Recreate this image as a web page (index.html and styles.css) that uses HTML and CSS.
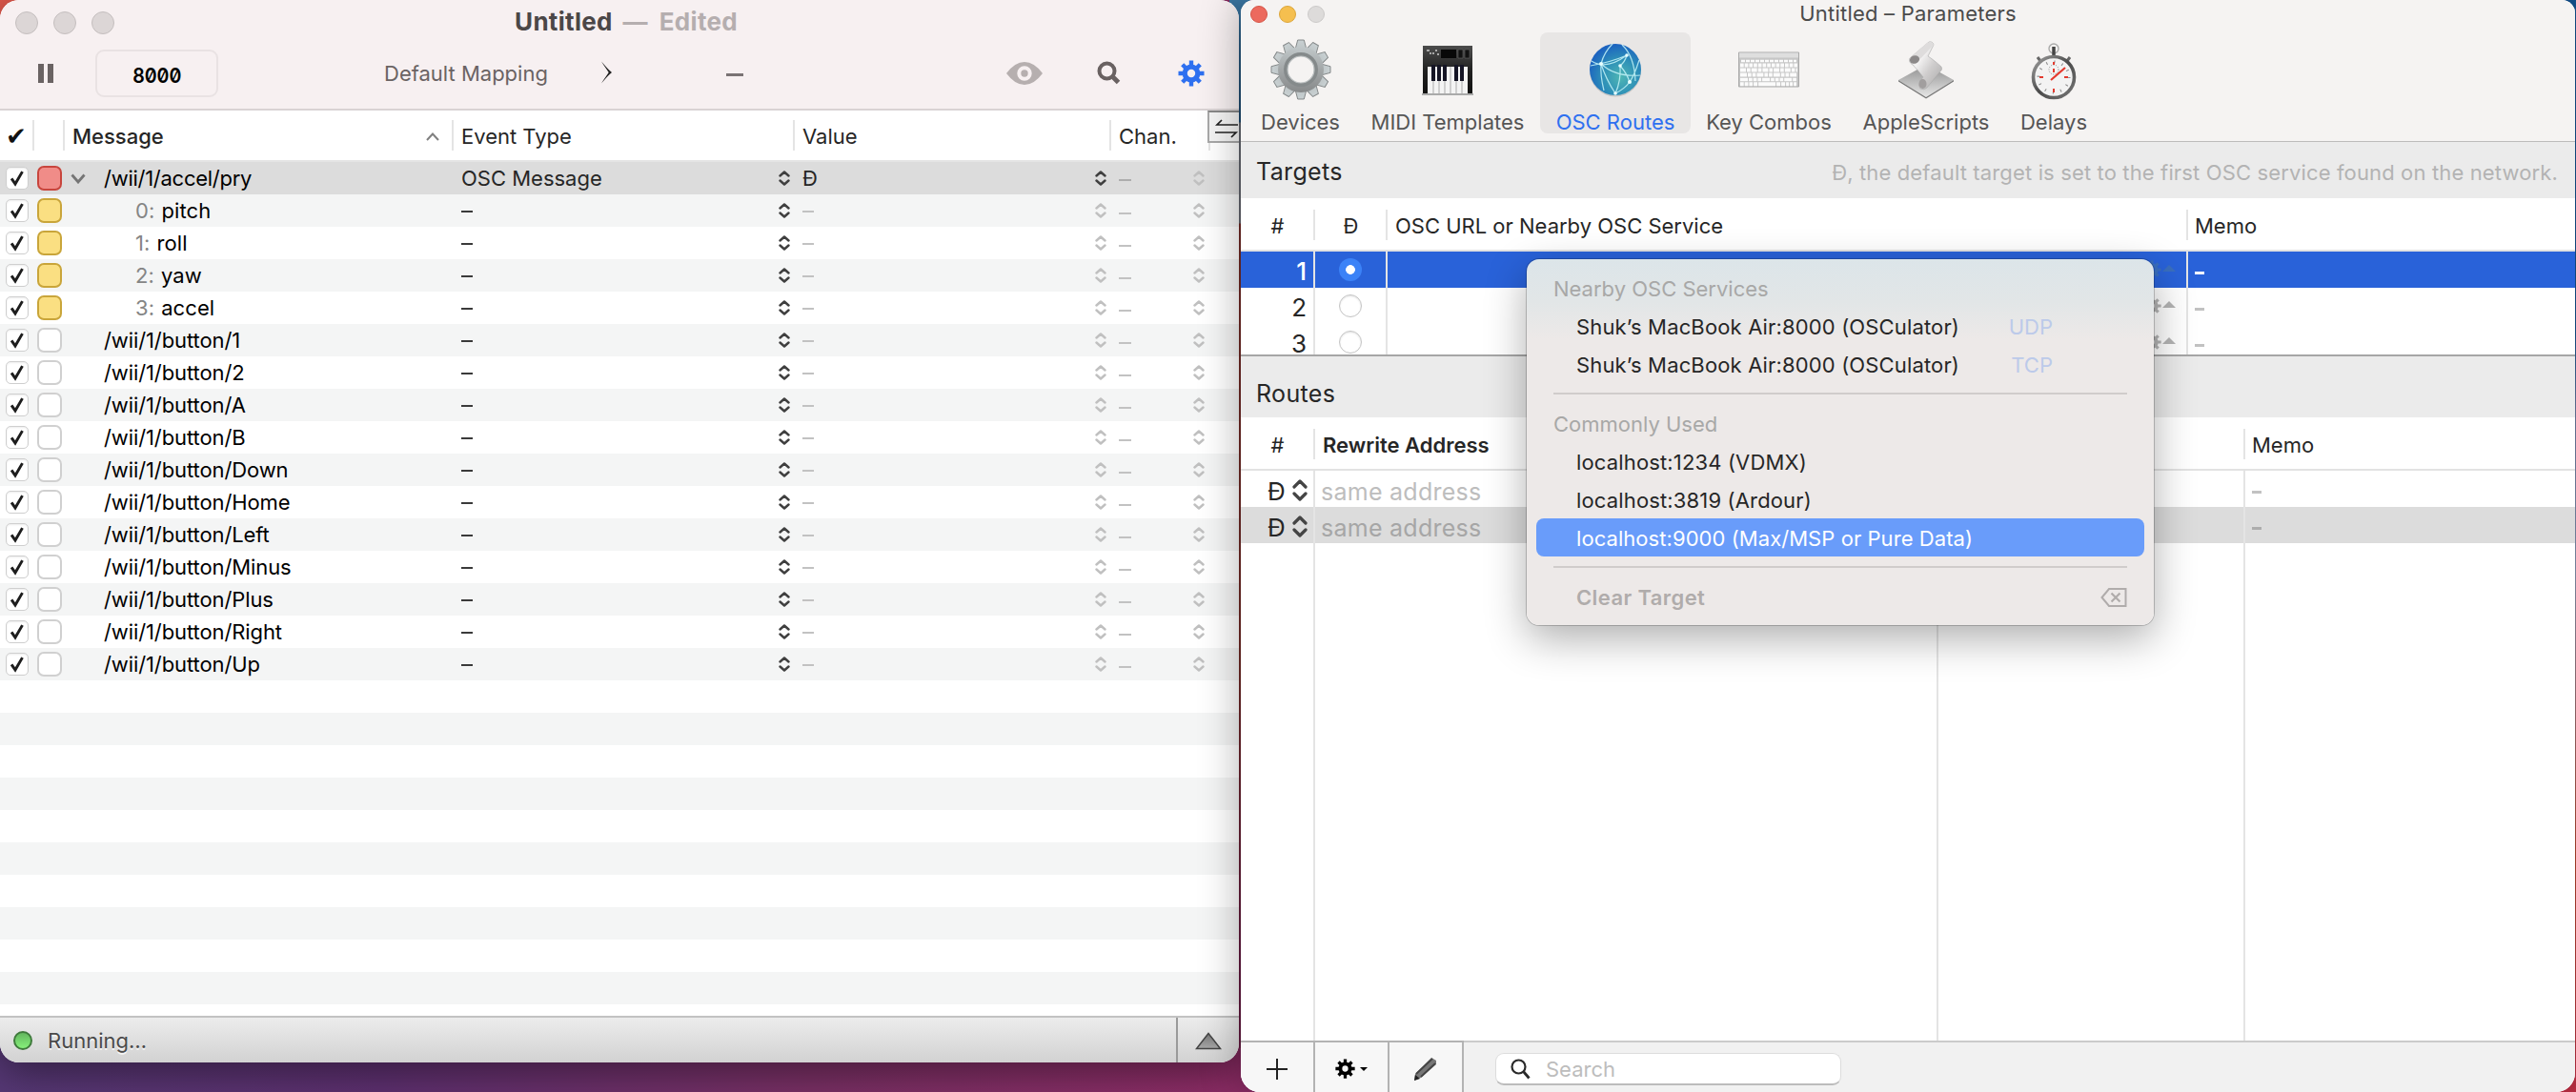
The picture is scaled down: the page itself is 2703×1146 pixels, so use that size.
FILE: index.html
```
<!DOCTYPE html>
<html lang="en">
<head>
<meta charset="utf-8">
<title>Untitled – Parameters</title>
<link rel="stylesheet" href="styles.css">
</head>
<body>
<svg class="defs" width="0" height="0">
  <defs>
    <symbol id="check" viewBox="0 0 24 24"><path d="M5.5 12.5l4.3 6L18 4.5" fill="none" stroke="#1d1d1d" stroke-width="3.2"/></symbol>
    <symbol id="step" viewBox="0 0 12 16"><path d="M1.5 5.5L6 1.5l4.5 4M1.5 10.5L6 14.500l4.500-4" fill="none" stroke="currentColor" stroke-width="2.400" stroke-linecap="round" stroke-linejoin="round"/></symbol>
    <symbol id="gear8" viewBox="-14 -14 28 28">
      <path fill="none" stroke="currentColor" stroke-width="4.400" d="M0-13.500V-8M0 13.500V8M-13.500 0H-8M13.500 0H8M-9.300-9.300l4 4M9.300-9.300l-4 4M-9.300 9.300l4-4M9.300 9.300l-4-4"/>
      <circle r="6.800" fill="none" stroke="currentColor" stroke-width="5.200"/>
    </symbol>
    <path id="tooth" d="M-3.300-31h6.600l2.400 9h-11.400z"/>
    <linearGradient id="steel" x1="0" y1="-31" x2="0" y2="31" gradientUnits="userSpaceOnUse"><stop offset="0" stop-color="#c9d1d3"/><stop offset=".5" stop-color="#a3a7a8"/><stop offset="1" stop-color="#7f8182"/></linearGradient>
    <radialGradient id="sea" cx=".6" cy=".65" r=".65"><stop offset="0" stop-color="#4fb6b4"/><stop offset=".55" stop-color="#2d8fb8"/><stop offset="1" stop-color="#1c63c0"/></radialGradient>
    <linearGradient id="black" x1="0" y1="0" x2="0" y2="1"><stop offset="0" stop-color="#4c4c4c"/><stop offset=".5" stop-color="#222"/><stop offset="1" stop-color="#111"/></linearGradient>
    <linearGradient id="paper" x1="0" y1="0" x2="1" y2="1"><stop offset="0" stop-color="#bdbbbb"/><stop offset=".35" stop-color="#f3f2f2"/><stop offset=".6" stop-color="#cfcdcd"/><stop offset="1" stop-color="#a9a8a8"/></linearGradient>
    <linearGradient id="plate" x1="0" y1="0" x2="0" y2="1"><stop offset="0" stop-color="#8f8f8f"/><stop offset="1" stop-color="#e6e6e6"/></linearGradient>
    <linearGradient id="rim" x1="0" y1="0" x2="1" y2="1"><stop offset="0" stop-color="#a0a0a0"/><stop offset=".5" stop-color="#4a4a4a"/><stop offset="1" stop-color="#777"/></linearGradient>
    <linearGradient id="tri" x1="0" y1="0" x2="0" y2="1"><stop offset="0" stop-color="#777"/><stop offset="1" stop-color="#a8a8a8"/></linearGradient>
  </defs>
</svg>

<div class="desktop">
<section class="win main">
  <header class="main-head">
    <div class="title-row">
      <span class="lights"><i></i><i></i><i></i></span>
      <h1>Untitled <em class="emdash">—</em><em>Edited</em></h1>
    </div>
    <div class="tools">
      <svg class="pause" width="16" height="20"><path d="M0 0h6v20H0zM10 0h6v20h-6z" fill="#6a6363"/></svg>
      <span class="port"><span>8000</span></span>
      <span class="mapping">Default Mapping</span>
      <svg class="chev" width="13" height="24"><path d="M1 0.500C5 5 8 9 12 12C8 15 5 19 1 23.500C4 18.500 7 15 8.700 12C7 9 4 5.500 1 .5z" fill="#222"/></svg>
      <i class="minus"></i>
      <svg class="eye" width="38" height="24" viewBox="0 0 38 24"><path d="M0 12Q9 0 19 0T38 12Q29 24 19 24T0 12z" fill="#b6afaf"/><circle cx="19" cy="12" r="5.700" fill="#b6afaf" stroke="#f7f0f1" stroke-width="4"/><circle cx="19" cy="12" r="3" fill="#b6afaf"/></svg>
      <svg class="mag" width="25" height="25"><circle cx="10.500" cy="10.500" r="8" fill="none" stroke="#696161" stroke-width="4"/><path d="M15.500 15.500l7 7" stroke="#696161" stroke-width="5"/></svg>
      <svg class="cog" width="28" height="28"><use href="#gear8"/></svg>
    </div>
  </header>
  <div class="grid thead">
    <span class="tick">✔</span><span></span>
    <span class="name-h"><b>Message</b><svg width="14" height="9"><path d="M1 8l6-6.500L13 8" fill="none" stroke="#808080" stroke-width="2"/></svg></span>
    <span>Event Type</span><span>Value</span><span class="chan-h">Chan.</span>
    <span class="corner"><svg width="26" height="22" viewBox="0 0 26 22"><path d="M25 7H3L8 2M1 15h22l-5 5" fill="none" stroke="#222" stroke-width="1.700"/></svg></span>
  </div>
  <div class="rows">
    <div class="grid row sel"><span class="c"><svg class="box"><use href="#check"/></svg></span><span class="c"><i class="tag red"></i></span><span class="name"><svg class="disc" width="16" height="11"><path d="M1.500 1.500L8 9l6.500-7.500" fill="none" stroke="#757575" stroke-width="2.800"/></svg>/wii/1/accel/pry</span><span class="p">OSC Message<svg class="st on"><use href="#step"/></svg></span><span class="p">Đ<svg class="st on"><use href="#step"/></svg></span><span class="p ch"><i class="d lo"></i><svg class="st"><use href="#step"/></svg></span><span></span></div>
    <div class="grid row"><span class="c"><svg class="box"><use href="#check"/></svg></span><span class="c"><i class="tag yel"></i></span><span class="name kid"><s>0:</s>pitch</span><span class="p"><i class="d dk"></i><svg class="st on"><use href="#step"/></svg></span><span class="p"><i class="d"></i><svg class="st"><use href="#step"/></svg></span><span class="p ch"><i class="d lo"></i><svg class="st"><use href="#step"/></svg></span><span></span></div>
    <div class="grid row"><span class="c"><svg class="box"><use href="#check"/></svg></span><span class="c"><i class="tag yel"></i></span><span class="name kid"><s>1:</s>roll</span><span class="p"><i class="d dk"></i><svg class="st on"><use href="#step"/></svg></span><span class="p"><i class="d"></i><svg class="st"><use href="#step"/></svg></span><span class="p ch"><i class="d lo"></i><svg class="st"><use href="#step"/></svg></span><span></span></div>
    <div class="grid row"><span class="c"><svg class="box"><use href="#check"/></svg></span><span class="c"><i class="tag yel"></i></span><span class="name kid"><s>2:</s>yaw</span><span class="p"><i class="d dk"></i><svg class="st on"><use href="#step"/></svg></span><span class="p"><i class="d"></i><svg class="st"><use href="#step"/></svg></span><span class="p ch"><i class="d lo"></i><svg class="st"><use href="#step"/></svg></span><span></span></div>
    <div class="grid row"><span class="c"><svg class="box"><use href="#check"/></svg></span><span class="c"><i class="tag yel"></i></span><span class="name kid"><s>3:</s>accel</span><span class="p"><i class="d dk"></i><svg class="st on"><use href="#step"/></svg></span><span class="p"><i class="d"></i><svg class="st"><use href="#step"/></svg></span><span class="p ch"><i class="d lo"></i><svg class="st"><use href="#step"/></svg></span><span></span></div>
    <div class="grid row"><span class="c"><svg class="box"><use href="#check"/></svg></span><span class="c"><i class="tag"></i></span><span class="name">/wii/1/button/1</span><span class="p"><i class="d dk"></i><svg class="st on"><use href="#step"/></svg></span><span class="p"><i class="d"></i><svg class="st"><use href="#step"/></svg></span><span class="p ch"><i class="d lo"></i><svg class="st"><use href="#step"/></svg></span><span></span></div>
    <div class="grid row"><span class="c"><svg class="box"><use href="#check"/></svg></span><span class="c"><i class="tag"></i></span><span class="name">/wii/1/button/2</span><span class="p"><i class="d dk"></i><svg class="st on"><use href="#step"/></svg></span><span class="p"><i class="d"></i><svg class="st"><use href="#step"/></svg></span><span class="p ch"><i class="d lo"></i><svg class="st"><use href="#step"/></svg></span><span></span></div>
    <div class="grid row"><span class="c"><svg class="box"><use href="#check"/></svg></span><span class="c"><i class="tag"></i></span><span class="name">/wii/1/button/A</span><span class="p"><i class="d dk"></i><svg class="st on"><use href="#step"/></svg></span><span class="p"><i class="d"></i><svg class="st"><use href="#step"/></svg></span><span class="p ch"><i class="d lo"></i><svg class="st"><use href="#step"/></svg></span><span></span></div>
    <div class="grid row"><span class="c"><svg class="box"><use href="#check"/></svg></span><span class="c"><i class="tag"></i></span><span class="name">/wii/1/button/B</span><span class="p"><i class="d dk"></i><svg class="st on"><use href="#step"/></svg></span><span class="p"><i class="d"></i><svg class="st"><use href="#step"/></svg></span><span class="p ch"><i class="d lo"></i><svg class="st"><use href="#step"/></svg></span><span></span></div>
    <div class="grid row"><span class="c"><svg class="box"><use href="#check"/></svg></span><span class="c"><i class="tag"></i></span><span class="name">/wii/1/button/Down</span><span class="p"><i class="d dk"></i><svg class="st on"><use href="#step"/></svg></span><span class="p"><i class="d"></i><svg class="st"><use href="#step"/></svg></span><span class="p ch"><i class="d lo"></i><svg class="st"><use href="#step"/></svg></span><span></span></div>
    <div class="grid row"><span class="c"><svg class="box"><use href="#check"/></svg></span><span class="c"><i class="tag"></i></span><span class="name">/wii/1/button/Home</span><span class="p"><i class="d dk"></i><svg class="st on"><use href="#step"/></svg></span><span class="p"><i class="d"></i><svg class="st"><use href="#step"/></svg></span><span class="p ch"><i class="d lo"></i><svg class="st"><use href="#step"/></svg></span><span></span></div>
    <div class="grid row"><span class="c"><svg class="box"><use href="#check"/></svg></span><span class="c"><i class="tag"></i></span><span class="name">/wii/1/button/Left</span><span class="p"><i class="d dk"></i><svg class="st on"><use href="#step"/></svg></span><span class="p"><i class="d"></i><svg class="st"><use href="#step"/></svg></span><span class="p ch"><i class="d lo"></i><svg class="st"><use href="#step"/></svg></span><span></span></div>
    <div class="grid row"><span class="c"><svg class="box"><use href="#check"/></svg></span><span class="c"><i class="tag"></i></span><span class="name">/wii/1/button/Minus</span><span class="p"><i class="d dk"></i><svg class="st on"><use href="#step"/></svg></span><span class="p"><i class="d"></i><svg class="st"><use href="#step"/></svg></span><span class="p ch"><i class="d lo"></i><svg class="st"><use href="#step"/></svg></span><span></span></div>
    <div class="grid row"><span class="c"><svg class="box"><use href="#check"/></svg></span><span class="c"><i class="tag"></i></span><span class="name">/wii/1/button/Plus</span><span class="p"><i class="d dk"></i><svg class="st on"><use href="#step"/></svg></span><span class="p"><i class="d"></i><svg class="st"><use href="#step"/></svg></span><span class="p ch"><i class="d lo"></i><svg class="st"><use href="#step"/></svg></span><span></span></div>
    <div class="grid row"><span class="c"><svg class="box"><use href="#check"/></svg></span><span class="c"><i class="tag"></i></span><span class="name">/wii/1/button/Right</span><span class="p"><i class="d dk"></i><svg class="st on"><use href="#step"/></svg></span><span class="p"><i class="d"></i><svg class="st"><use href="#step"/></svg></span><span class="p ch"><i class="d lo"></i><svg class="st"><use href="#step"/></svg></span><span></span></div>
    <div class="grid row"><span class="c"><svg class="box"><use href="#check"/></svg></span><span class="c"><i class="tag"></i></span><span class="name">/wii/1/button/Up</span><span class="p"><i class="d dk"></i><svg class="st on"><use href="#step"/></svg></span><span class="p"><i class="d"></i><svg class="st"><use href="#step"/></svg></span><span class="p ch"><i class="d lo"></i><svg class="st"><use href="#step"/></svg></span><span></span></div>
  </div>
  <footer class="status">
    <i class="led"></i><span>Running…</span>
    <div class="grow"><svg width="28" height="20"><path d="M14 1.500L26.500 17.500h-25z" fill="url(#tri)" stroke="#444" stroke-width="1.500"/></svg></div>
  </footer>
</section>

<section class="win params">
  <header class="params-head">
    <div class="ptitle"><span class="lights"><i class="r"></i><i class="y"></i><i></i></span><h2>Untitled – Parameters</h2></div>
    <nav>
      <a><svg width="64" height="64" viewBox="-32 -32 64 64"><g fill="url(#steel)"><g stroke="#85898a" stroke-width="1"><use href="#tooth"/><use href="#tooth" transform="rotate(30)"/><use href="#tooth" transform="rotate(60)"/><use href="#tooth" transform="rotate(90)"/><use href="#tooth" transform="rotate(120)"/><use href="#tooth" transform="rotate(150)"/><use href="#tooth" transform="rotate(180)"/><use href="#tooth" transform="rotate(210)"/><use href="#tooth" transform="rotate(240)"/><use href="#tooth" transform="rotate(270)"/><use href="#tooth" transform="rotate(300)"/><use href="#tooth" transform="rotate(330)"/></g><circle r="24"/></g><circle r="16" fill="#f5f3f2" stroke="#858a8b" stroke-width="4"/><circle r="14" fill="none" stroke="#b9bebf" stroke-width="1.200"/></svg>Devices</a>
      <a><svg width="56" height="64" viewBox="0 0 56 64"><path d="M1 57h54v2H1z" fill="#aaa"/><path d="M2 7h52v50H2z" fill="url(#black)"/><path d="M21 11h16v9H21z" fill="#080808"/><path d="M39 11h5v9h-5zM46 11h5v9h-5z" fill="#111" stroke="#666" stroke-width=".6"/><path d="M6 12h3M9 15h2M12 15h2M15 12h2M17 16h2" stroke="#ccc" stroke-width="1.500"/><path d="M7 29h42v28H7z" fill="#f4f4f4"/><path d="M13 29v28M19 29v28M25 29v28M31 29v28M37 29v28M43 29v28" stroke="#aaa"/><path d="M11 27h4v17h-4zM17 27h4v17h-4zM23 27h4v17h-4zM35 27h4v17h-4zM41 27h4v17h-4z" fill="#151525"/></svg>MIDI Templates</a>
      <a class="on"><svg width="56" height="64" viewBox="-28 -32 56 64"><circle cy="1.500" r="27" fill="#0002"/><circle r="27" fill="url(#sea)"/><g fill="none" stroke="#c5f4f8" stroke-width="1.200" stroke-opacity=".85"><path d="M-25-9Q-10 1 12-15M-26-4Q-4-8 12-15M-15-6Q-12-18 -3-27M-15-6Q-16 6 -12 22M-15-6Q-10 10 0 25M-15-6Q0 8 26 6M5-4Q6 12 0 25M5-4Q12 4 15 13M5-4Q10-8 12-15M0 25Q10 20 15 13T25-10M7-26Q20-14 21 12"/></g><g fill="#e8ffff"><circle cx="-15" cy="-6" r="2"/><circle cx="5" cy="-4" r="1.800"/><circle cx="12" cy="-15" r="1.800"/><circle cx="15" cy="13" r="2"/><circle cx="0" cy="25" r="1.800"/></g></svg>OSC Routes</a>
      <a><svg width="64" height="64" viewBox="0 0 64 64"><path d="M.5 14h63v36H.5z" fill="#c6c6c6" stroke="#aaa"/><path d="M1 14.500h62v5H1z" fill="#dedede"/><g fill="none" stroke="#fbfbfb"><path d="M3 23h58" stroke-width="2.500" stroke-dasharray="4 1"/><path d="M2 27.500h60" stroke-width="4" stroke-dasharray="3.700 1"/><path d="M2 32.500h60" stroke-width="4" stroke-dasharray="6 1 3.700 1"/><path d="M2 37.500h60" stroke-width="4" stroke-dasharray="7 1 3.700 1 3.700 1"/><path d="M2 42.500h60" stroke-width="3.500" stroke-dasharray="8 1 3.700 1 3.700 1 3.700 1"/><path d="M2 47.200h60" stroke-width="4" stroke-dasharray="3.700 1 3.700 1 3.700 1 4 1 18 1 4 1 4 1 3 1 3 1 3"/></g></svg>Key Combos</a>
      <a><svg width="60" height="64" viewBox="0 0 60 64"><path d="M1 43L30 27l29 16L30 61z" fill="url(#plate)"/><path d="M1 43L30 61l29-18v1.500L30 62.500 1 44.500z" fill="#777"/><path d="M13 20L33 3q4-1 5 3l-6 12q5 3 14 11 2 3-2 6L31 51q-3 3-7 1-3-3 0-8l3-4Q21 32 16 27q-5-3-3-7z" fill="url(#paper)" stroke="#aaa" stroke-width=".6"/><path d="M13 20L31 4q5-2 7 2L22 23q-4 4-8 1-2-2-1-4z" fill="#dedcdc"/><ellipse cx="18" cy="21.500" rx="5.200" ry="4.200" fill="#8c8989" transform="rotate(-20 18 21.500)"/><ellipse cx="26.500" cy="47" rx="4" ry="5" fill="#a19e9e"/></svg>AppleScripts</a>
      <a><svg width="50" height="64" viewBox="-25 -37 50 64"><circle cy="-27" r="5" fill="none" stroke="#aaa" stroke-width="1.400"/><path d="M0-29v10" stroke="#444" stroke-width="3.500"/><path d="M-17-18l3 4M17-18l-3 4" stroke="#666" stroke-width="3"/><circle cy="3" r="21.500" fill="#f3f3f3" stroke="url(#rim)" stroke-width="3.600"/><circle cy="3" r="16" fill="none" stroke="#888" stroke-width="3" stroke-dasharray="1 7.377"/><circle cy="-5" r="5" fill="none" stroke="#888" stroke-dasharray="1 1.500"/><path d="M0-13v3M0-6v4M0 15v4M-15 3h4M11 3h4" stroke="#e23b2f" stroke-width="2"/><path d="M-3 6L12-7" stroke="#e5382c" stroke-width="2.200"/></svg>Delays</a>
    </nav>
  </header>
  <div class="bar targets-bar"><h3>Targets</h3><p>Đ, the default target is set to the first OSC service found on the network.</p></div>
  <div class="tg ph"><span class="mid">#</span><span class="mid">Đ</span><span>OSC URL or Nearby OSC Service</span><span class="memo">Memo</span></div>
  <div class="targets">
    <div class="tg pr blue"><span class="num">1</span><span class="mid"><i class="radio on"></i></span><span class="cogs"><svg width="40" height="24"><use href="#gear8" width="20" height="20" y="2"/><path d="M21 14h14l-7-7z" fill="currentColor"/></svg></span><span><i class="d"></i></span></div>
    <div class="tg pr"><span class="num">2</span><span class="mid"><i class="radio"></i></span><span class="cogs"><svg width="40" height="24"><use href="#gear8" width="20" height="20" y="2"/><path d="M21 14h14l-7-7z" fill="currentColor"/></svg></span><span><i class="d"></i></span></div>
    <div class="tg pr"><span class="num">3</span><span class="mid"><i class="radio"></i></span><span class="cogs"><svg width="40" height="24"><use href="#gear8" width="20" height="20" y="2"/><path d="M21 14h14l-7-7z" fill="currentColor"/></svg></span><span><i class="d"></i></span></div>
  </div>
  <div class="bar routes-bar"><h3>Routes</h3></div>
  <div class="rg ph"><span class="mid">#</span><span><b>Rewrite Address</b></span><span></span><span class="memo">Memo</span></div>
  <div class="routes">
    <div class="rg pr"><span class="dest">Đ<svg width="16" height="23" viewBox="0 0 16 23"><path d="M2 8l6-6 6 6M2 15l6 6 6-6" fill="none" stroke="#444" stroke-width="3.200" stroke-linecap="round" stroke-linejoin="round"/></svg></span><span class="same">same address</span><span></span><span><i class="d"></i></span></div>
    <div class="rg pr grey"><span class="dest">Đ<svg width="16" height="23" viewBox="0 0 16 23"><path d="M2 8l6-6 6 6M2 15l6 6 6-6" fill="none" stroke="#444" stroke-width="3.200" stroke-linecap="round" stroke-linejoin="round"/></svg></span><span class="same">same address</span><span></span><span><i class="d"></i></span></div>
    <div class="rg fill"><span></span><span></span><span></span><span></span></div>
  </div>
  <footer class="bottom">
    <button><svg width="22" height="22"><path d="M11 0v22M0 11h22" stroke="#222" stroke-width="2"/></svg></button>
    <button><svg width="34" height="22"><use href="#gear8" width="21" height="21"/><path d="M26 9h8l-4 4z"/></svg></button>
    <button><svg width="26" height="26" viewBox="0 0 26 26"><path d="M19 1l5 3v4L8 22l-7 3 1-7z" fill="#777"/><path d="M20 2L3 18M23 7L8 21" stroke="#444" stroke-width="1.800"/><path d="M1 25l1-6 5 4z" fill="#222"/></svg></button>
    <label><svg width="21" height="22"><circle cx="8.500" cy="8.500" r="7" fill="none" stroke="#2a2a2a" stroke-width="2.200"/><path d="M13.500 13.500l6 7" stroke="#2a2a2a" stroke-width="2.800"/></svg>Search</label>
  </footer>

  <div class="menu">
    <div class="mi head">Nearby OSC Services</div>
    <div class="mi wide">Shuk’s MacBook Air:8000 (OSCulator)<span>UDP</span></div>
    <div class="mi wide">Shuk’s MacBook Air:8000 (OSCulator)<span>TCP</span></div>
    <hr>
    <div class="mi head">Commonly Used</div>
    <div class="mi wide">localhost:1234 (VDMX)</div>
    <div class="mi wide">localhost:3819 (Ardour)</div>
    <div class="mi hot">localhost:9000 (Max/MSP or Pure Data)</div>
    <hr>
    <div class="mi clear">Clear Target<svg width="28" height="20"><path d="M9 1h17.500v18H9L1.500 10z" fill="none" stroke="#b0acab" stroke-width="2"/><path d="M11.500 5.500l9 9M20.500 5.500l-9 9" stroke="#b0acab" stroke-width="2.200"/></svg></div>
  </div>
</section>
</div>
</body>
</html>
```
FILE: styles.css
```
* { box-sizing: border-box; }
body { margin: 0; font: 22px/26px Inter, "Noto Sans", sans-serif; color: #262626; }
h1, h2, h3, p { margin: 0; font-weight: 400; }
i, em, s { font-style: normal; text-decoration: none; }
b { font-weight: 500; }
svg { display: block; flex: none; }
.defs { position: absolute; }

.desktop {
  position: relative; width: 2703px; height: 1146px; overflow: hidden;
  background:
    linear-gradient(#3f7fae 0, #245a88 128px, #7d808b 129px, #7d808b 234px, #8c3530 235px, #8c3530 700px, #7c2250 1000px, #7c2250 1100px, transparent 1100px) 1290px 0 / 22px 100% no-repeat,
    linear-gradient(#145391 0, #145391 350px, #6f7ea5 430px, #8b98b5 600px, #b8452c 900px, #c22f45 1146px) 2600px 0 / 103px 100% no-repeat,
    linear-gradient(#e0594d, #e0594d) 0 0 / 60px 60px no-repeat,
    linear-gradient(90deg, #563875 0, #5e3070 400px, #7a3065 850px, #8f2d67 1302px);
}
.win { position: absolute; display: flex; flex-direction: column; overflow: hidden; }
.main { left: 0; top: 0; width: 1300px; height: 1115px; border-radius: 20px; background: #fff; box-shadow: 0 10px 44px rgba(0,0,0,.45); }
.params { left: 1302px; top: 0; width: 1400px; height: 1146px; background: #fff; border-radius: 14px 14px 20px 20px; overflow: visible; box-shadow: 0 0 44px rgba(0,0,0,.33); }

.main-head { height: 116px; background: #f7f0f1; border-bottom: 2px solid #d9d3d4; }
.title-row { height: 46px; position: relative; display: flex; justify-content: center; align-items: center; }
.lights { position: absolute; left: 16px; top: 12px; display: flex; gap: 16px; }
.lights i { width: 24px; height: 24px; border-radius: 50%; background: #dcd6d6; border: 1px solid #c4bebe; }
h1 { font-size: 26px; font-weight: 700; color: #4b4747; letter-spacing: .3px; display: flex; align-items: center; padding-left: 14px; }
h1 em { color: #b5aeaf; }
h1 .emdash { margin: 0 13px 0 12px; width: 24px; display: flex; justify-content: center; }
.tools { display: flex; align-items: center; height: 62px; padding-left: 40px; }
.port { width: 129px; height: 50px; margin-left: 44px; border: 2px solid #e9e2e3; border-radius: 9px; display: flex; align-items: center; justify-content: center; padding-top: 4px; color: #000; font-weight: 600; font-feature-settings: "zero" 1; }
.port span { transform: scaleX(.89); }
.mapping { margin-left: 174px; margin-top: -1px; color: #6a6363; }
.chev { margin: -2px 0 0 55px; }
.minus { width: 18px; height: 3px; margin-left: 119px; margin-top: 2px; background: #7a7374; }
.eye { margin-left: 276px; margin-top: -1px; }
.mag { margin-left: 57px; margin-top: -2px; }
.cog { margin-left: 60px; margin-top: 0; color: #2e70f0; }

.grid { display: grid; grid-template-columns: 36px 32px 408px 358px 332px 104px 30px; }
.thead { height: 54px; padding-top: 10px; border-bottom: 2px solid #e4e4e4; flex: none; }
.thead > span { height: 32px; border-right: 2px solid #e4e4e4; padding: 4px 0 0 8px; }
.thead > span:last-child { border-right: 0; }
.thead .tick { font-family: "DejaVu Sans", sans-serif; font-size: 26px; padding-left: 6px; color: #111; }
.thead .name-h { display: flex; justify-content: space-between; align-items: center; padding: 2px 13px 0 8px; }
.thead .corner { margin: -10px 0 0 -3px; width: 35px; height: 34px; padding: 6px 0 0 5px; background: #f4f4f4; border: 2px solid #a8a8a8; border-top-color: #888; }
.rows { flex: 1; background: repeating-linear-gradient(#fff 0 34px, #f4f5f5 34px 68px); }
.row { height: 34px; color: #000; align-items: center; }
.row > span { display: flex; align-items: center; }
.sel { background: #dcdcdc; }
.box { width: 24px; height: 24px; margin-left: 6px; background: #fff; border: 1.500px solid #cfcfcf; border-radius: 5px; margin-top: -1px; box-shadow: inset 0 1px 2px rgba(0,0,0,.08); }
.tag { width: 26px; height: 26px; margin-left: 3px; margin-top: -1px; border: 2px solid #d0d0d0; border-radius: 7px; background: #fff; }
.red { background: #f08c88; border-color: #c8453d; }
.yel { background: #fadf82; border-color: #c9a53a; }
.name { padding: 0 0 1px 41px; letter-spacing: -.1px; height: 34px; position: relative; }
.sel .name { letter-spacing: -.27px; }
.name .disc { position: absolute; left: 6px; top: 12px; }
.kid { padding-left: 74px; letter-spacing: .1px; }
.kid s { color: #858585; margin-right: 7px; }
.row .p { justify-content: space-between; padding: 0 5px 1px 8px; height: 34px; color: #262626; }
.row .p.ch { padding: 0 13px 0 8px; }
.ch { width: 111px; }
.d { width: 12px; height: 2px; background: #c2c2c2; margin-top: 2px; }
.dk { background: #3a3a3a; }
.lo { width: 13px; margin-top: 5px; }
.sel .lo { background: #adadad; margin-top: 4px; }
.st { width: 12px; height: 16px; color: #c0c0c0; }
.ch .st { margin-top: -1px; }
.st.on { color: #3f3f3f; }
.status { height: 49px; flex: none; display: flex; align-items: center; padding-left: 14px; border-top: 2px solid #c2c2c2; background: linear-gradient(#ececec, #d2d2d2); color: #4a4a4a; text-shadow: 0 2px 0 #f3f3f3; }
.led { width: 20px; height: 20px; border-radius: 50%; border: 2px solid #3f7a3c; background: linear-gradient(#63b75f, #86f07a); margin-right: 16px; }
.grow { margin-left: auto; width: 66px; height: 100%; border-left: 2px solid #9a9a9a; display: flex; align-items: center; justify-content: center; padding-top: 2px; }

.params-head { height: 149px; border-bottom: 1px solid #bdbcbb; background: #f5f3f2; border-radius: 14px 14px 0 0; flex: none; }
.ptitle { height: 34px; display: flex; justify-content: center; align-items: flex-start; padding-top: 1px; letter-spacing: .22px; }
.ptitle h2 { font-size: 22px; color: #4b4b4b; }
.params .lights { left: 10px; top: 6px; gap: 12px; }
.params .lights i { width: 18px; height: 18px; background: #dddbda; border-color: #cccac9; }
.params .lights .r { background: #ec6a5e; border-color: #d65547; }
.params .lights .y { background: #f5bf4f; border-color: #dca63a; }
nav { display: grid; grid-template-columns: 115px 194px 158px 164px 166px 102px; padding-left: 5px; }
nav a { height: 106px; padding: 7px 0 0; display: flex; flex-direction: column; align-items: center; gap: 10px; color: #555; border-radius: 8px; white-space: nowrap; }
nav a.on { background: #e8e6e5; color: #2e70f0; }
.bar { display: flex; align-items: center; justify-content: space-between; background: #ebebeb; padding: 2px 18px 0 16px; flex: none; }
.targets-bar { height: 59px; padding-top: 2px; }
.bar p { color: #b3b3b3; letter-spacing: .14px; padding-top: 2px; }
h3 { font-size: 25px; letter-spacing: .35px; }
.routes-bar { height: 64px; padding-top: 14px; }
.tg { display: grid; grid-template-columns: 78px 76px 840px 406px; }
.rg { display: grid; grid-template-columns: 78px 654px 322px 346px; }
.ph { height: 56px; padding-top: 12px; border-bottom: 2px solid #e2e2e2; flex: none; }
.ph > span { height: 32px; border-right: 2px solid #e4e4e4; padding: 4px 0 0 8px; }
.ph > span:last-child, .pr > span:last-child, .fill > span:last-child { border-right: 0; }
.ph > .mid { text-align: center; padding: 4px 0 0 1px; }
.ph .memo { padding-left: 7px; }
.ph b { font-weight: 600; }
.pr { height: 38px; font-size: 25px; }
.pr > span { height: 38px; border-right: 2px solid #e4e4e4; display: flex; align-items: center; padding-left: 7px; }
.pr .mid { justify-content: center; padding-left: 0; }
.pr .num { justify-content: flex-end; padding: 4px 7px 0 0; font-size: 26px; line-height: 20px; }
.pr .d { margin-top: 7px; width: 10px; height: 3px; }
.blue { background: #2962d9; color: #fff; }
.blue .num { font-weight: 500; }
.blue .d { background: #fff; }
.blue .cogs { color: #3a6fbe; }
.cogs { justify-content: flex-end; color: #b5b5b5; padding-right: 6px; }
.radio { width: 24px; height: 24px; margin-top: -1px; border-radius: 50%; background: #fff; border: 1.500px solid #c4c4c4; box-shadow: inset 0 1px 2px rgba(0,0,0,.12); }
.radio.on { border: 0; background: radial-gradient(circle, #fff 0 4.500px, #3b82f7 5.200px); box-shadow: none; }
.targets { height: 110px; overflow: hidden; border-bottom: 2px solid #a6a6a6; flex: none; }
.routes { flex: 1; display: flex; flex-direction: column; }
.fill { flex: 1; }
.fill span { border-right: 2px solid #e4e4e4; }
.grey { background: #dcdcdc; }
.grey .d { background: #adadad; }
.pr .dest { justify-content: space-between; padding: 5px 6px 0 28px; font-size: 26px; }
.dest svg { margin-top: -3px; }
.pr .same { color: #bdbdbd; letter-spacing: .26px; padding: 5px 0 0 6px; }
.grey .same { color: #a6a6a6; }
.bottom { height: 54px; flex: none; display: flex; background: #f1f1f1; border-top: 2px solid #cbcbcb; border-radius: 0 0 20px 20px; }
.bottom button { width: 78px; height: 54px; margin-top: -2px; border: 0; border-top: 2px solid #b3b3b3; border-right: 2px solid #b3b3b3; background: #f7f7f7; display: flex; align-items: center; justify-content: center; padding: 4px 0 0; }
.bottom button:first-child { border-bottom-left-radius: 20px; }
.bottom label { width: 363px; height: 34px; margin: 11px 0 0 33px; background: #fff; border: 1px solid #dcdcdc; border-bottom: 2px solid #bcbcbc; border-radius: 9px; display: flex; align-items: center; gap: 16px; padding-left: 15px; color: #bdbdbd; }

.menu { position: absolute; left: 300px; top: 272px; width: 658px; height: 384px; padding: 10px; border-radius: 13px; background: linear-gradient(#dce5e9 0, #e2e6e7 45px, #ede9e8 85px); box-shadow: 0 0 0 1px rgba(0,0,0,.2), 0 14px 44px rgba(0,0,0,.32); }
.mi { height: 40px; display: flex; align-items: center; padding: 2px 96px 0 42px; justify-content: space-between; }
.mi.head { padding-left: 18px; color: #a8a8a7; }
.mi.wide { letter-spacing: .15px; }
.mi span { color: #bccaea; letter-spacing: 0; }
.hot { background: #699cfa; color: #fff; border-radius: 8px; letter-spacing: .06px; padding-top: 1px; }
.menu hr { height: 2px; margin: 10px 18px; border: 0; background: #d0cccb; }
.clear { font-weight: 600; color: #b0acab; letter-spacing: .4px; padding-right: 18px; }
```
